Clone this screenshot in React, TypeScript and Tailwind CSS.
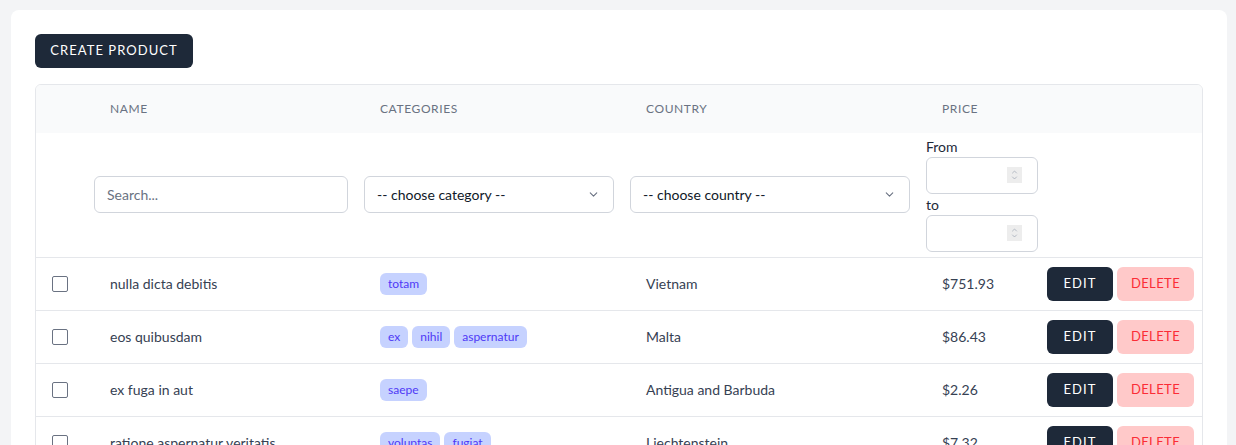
import { ChevronDown, ChevronUp } from "lucide-react";

type Product = {
  name: string;
  categories: string[];
  country: string;
  price: string;
};

const products: Product[] = [
  { name: "nulla dicta debitis", categories: ["totam"], country: "Vietnam", price: "$751.93" },
  { name: "eos quibusdam", categories: ["ex", "nihil", "aspernatur"], country: "Malta", price: "$86.43" },
  { name: "ex fuga in aut", categories: ["saepe"], country: "Antigua and Barbuda", price: "$2.26" },
  { name: "ratione aspernatur veritatis", categories: ["voluptas", "fugiat"], country: "Liechtenstein", price: "$7.32" },
];

function SelectBox({ label }: { label: string }) {
  return (
    <div className="relative">
      <select className="h-[37px] w-full appearance-none rounded-md border border-gray-300 bg-white pl-3 pr-8 text-sm text-gray-900 outline-none">
        <option>{label}</option>
      </select>
      <ChevronDown className="pointer-events-none absolute right-[14px] top-[12px] h-[13px] w-[13px] text-gray-500" strokeWidth={2} />
    </div>
  );
}

function NumberBox() {
  return (
    <div className="relative w-[112px]">
      <input type="text" className="h-[37px] w-full rounded-md border border-gray-300 bg-white px-3 text-sm outline-none" />
      <div className="pointer-events-none absolute right-[16px] top-[10px] flex h-[16px] w-[15px] flex-col items-center justify-center bg-[#ededed]">
        <ChevronUp className="-mb-[2px] h-[8px] w-[9px] text-gray-400" strokeWidth={2} />
        <ChevronDown className="h-[8px] w-[9px] text-gray-400" strokeWidth={2} />
      </div>
    </div>
  );
}

export default function App() {
  return (
    <div className="min-h-screen bg-gray-100 pl-[11px] pr-[9px] pt-[10px] font-['Lato','Open_Sans',sans-serif] text-gray-800">
      <div className="rounded-lg bg-white p-6">
        <button className="h-[34px] w-[158px] rounded-md bg-gray-800 text-[13px] uppercase tracking-[0.08em] text-white">
          Create product
        </button>

        <div className="mt-4 overflow-hidden rounded-t-md border border-gray-200">
          <table className="w-full table-fixed border-collapse">
            <colgroup>
              <col className="w-[58px]" />
              <col className="w-[270px]" />
              <col className="w-[266px]" />
              <col className="w-[296px]" />
              <col className="w-[113px]" />
              <col />
            </colgroup>
            <thead>
              <tr className="h-[48px] bg-gray-50 text-left text-xs uppercase tracking-wider text-gray-500">
                <th />
                <th className="px-4 font-normal">Name</th>
                <th className="px-4 font-normal">Categories</th>
                <th className="px-4 font-normal">Country</th>
                <th className="px-4 font-normal">Price</th>
                <th />
              </tr>
              <tr className="h-[124px] border-b border-gray-200">
                <th />
                <th className="pr-4 text-left font-normal">
                  <input
                    placeholder="Search..."
                    className="h-[37px] w-full rounded-md border border-gray-300 px-3 text-sm outline-none placeholder:text-gray-500"
                  />
                </th>
                <th className="pr-4 font-normal">
                  <SelectBox label="-- choose category --" />
                </th>
                <th className="pr-4 font-normal">
                  <SelectBox label="-- choose country --" />
                </th>
                <th className="text-left text-sm font-normal">
                  <div>From</div>
                  <NumberBox />
                  <div className="mt-px">to</div>
                  <NumberBox />
                </th>
                <th />
              </tr>
            </thead>
            <tbody className="text-sm text-gray-700">
              {products.map((p) => (
                <tr key={p.name} className="h-[53px] border-b border-gray-200">
                  <td className="pl-4">
                    <div className="h-4 w-4 rounded-[2px] border border-gray-500 bg-white" />
                  </td>
                  <td className="px-4">{p.name}</td>
                  <td className="px-4">
                    <div className="flex gap-1">
                      {p.categories.map((c) => (
                        <span key={c} className="rounded-md bg-indigo-200 px-2 py-[3px] text-xs text-indigo-600">
                          {c}
                        </span>
                      ))}
                    </div>
                  </td>
                  <td className="px-4">{p.country}</td>
                  <td className="px-4">{p.price}</td>
                  <td className="pr-2">
                    <div className="flex justify-end gap-1">
                      <button className="h-[34px] w-[66px] rounded-md bg-gray-800 text-[13px] tracking-[0.08em] text-white">
                        EDIT
                      </button>
                      <button className="h-[34px] w-[77px] rounded-md bg-red-200 text-[13px] tracking-[0.03em] text-red-500">
                        DELETE
                      </button>
                    </div>
                  </td>
                </tr>
              ))}
            </tbody>
          </table>
        </div>
      </div>
    </div>
  );
}
